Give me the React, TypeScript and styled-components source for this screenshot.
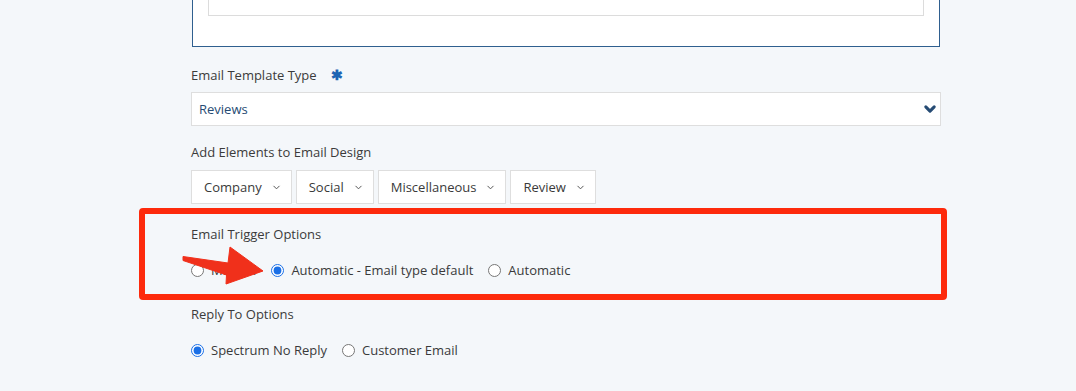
import React from "react";
import styled, { createGlobalStyle } from "styled-components";

const GlobalStyle = createGlobalStyle`
    body {
        margin: 0;
        background: #f4f7fa;
        font-family: "Open Sans", "Liberation Sans", sans-serif;
        color: #3a3a3a;
    }
`;

const Column = styled.div`
    margin-left: 191px;
    width: 750px;
    display: flex;
    flex-direction: column;
`;

const TopBox = styled.div`
    margin-left: 1px;
    width: 748px;
    box-sizing: border-box;
    background: #fff;
    border: 1px solid #2f5f8f;
    border-top: none;
    padding: 0 15px 30px 15px;
    > div {
        height: 16px;
        box-sizing: border-box;
        border: 1px solid #dcdcdc;
        border-top: none;
    }
`;

const Label = styled.div<{ $gap: number }>`
    margin-top: ${(p) => p.$gap}px;
    font-size: 13px;
    line-height: 18px;
    height: 18px;
    display: flex;
    align-items: center;
    gap: 14px;
    color: #3b3b3b;
`;

const Required = styled.span`
    color: #1d64b3;
    font-size: 14px;
    font-weight: 700;
`;

const SelectBox = styled.div`
    margin-top: 8px;
    height: 34px;
    box-sizing: border-box;
    background: #fff;
    border: 1px solid #dedede;
    display: flex;
    align-items: center;
    justify-content: space-between;
    padding: 0 3px 0 7px;
    font-size: 13px;
    color: #264b74;
`;

const ButtonRow = styled.div`
    margin-top: 9px;
    display: flex;
    gap: 4px;
`;

const DropButton = styled.div`
    height: 34px;
    box-sizing: border-box;
    background: #fff;
    border: 1px solid #dedede;
    display: flex;
    align-items: center;
    gap: 10px;
    padding: 0 10px 0 12px;
    font-size: 13px;
    color: #3a3a3a;
`;

const Section = styled.div`
    position: relative;
    display: flex;
    flex-direction: column;
`;

const Highlight = styled.div`
    position: absolute;
    left: -52px;
    top: -17px;
    width: 808px;
    height: 92px;
    box-sizing: border-box;
    border: 6px solid #fd2a0c;
    border-radius: 4px;
    pointer-events: none;
`;

const Arrow = styled.svg`
    position: absolute;
    left: -16px;
    top: 16px;
    width: 100px;
    height: 50px;
    overflow: visible;
`;

const RadioRow = styled.div`
    margin-top: 18px;
    height: 18px;
    display: flex;
    align-items: center;
    gap: 15px;
`;

const RadioLabel = styled.label`
    display: flex;
    align-items: center;
    gap: 7px;
    font-size: 13px;
    color: #3a3a3a;
    input {
        margin: 0;
        width: 13px;
        height: 13px;
        accent-color: #1a6fe6;
    }
`;

const Chevron = ({ size, width, color }: { size: number; width: number; color: string }) => (
    <svg width={size} height={size} viewBox="0 0 10 10">
        <path d="M2 3.5 L5 6.5 L8 3.5" fill="none" stroke={color} strokeWidth={width} strokeLinecap="round" strokeLinejoin="round" />
    </svg>
);

const Radio = ({ name, label, checked }: { name: string; label: string; checked?: boolean }) => (
    <RadioLabel>
        <input type="radio" name={name} defaultChecked={checked} />
        {label}
    </RadioLabel>
);

export default function App() {
    return (
        <>
            <GlobalStyle />
            <Column>
                <TopBox>
                    <div />
                </TopBox>

                <Label $gap={19}>
                    Email Template Type <Required>✱</Required>
                </Label>
                <SelectBox>
                    Reviews
                    <Chevron size={14} width={2.2} color="#264b74" />
                </SelectBox>

                <Label $gap={17}>Add Elements to Email Design</Label>
                <ButtonRow>
                    {["Company", "Social", "Miscellaneous", "Review"].map((b) => (
                        <DropButton key={b}>
                            {b}
                            <Chevron size={9} width={1.1} color="#555" />
                        </DropButton>
                    ))}
                </ButtonRow>

                <Section style={{ marginTop: 21 }}>
                    <Label $gap={0}>Email Trigger Options</Label>
                    <RadioRow>
                        <Radio name="trigger" label="Manual" />
                        <Radio name="trigger" label="Automatic - Email type default" checked />
                        <Radio name="trigger" label="Automatic" />
                    </RadioRow>
                    <Highlight />
                    <Arrow viewBox="0 0 100 50">
                        <polygon
                            points="8,15.5 53,22 55,6 88,30 51,43 51.5,34 8,19.5"
                            fill="#f0301b"
                            stroke="#f0301b"
                            strokeWidth={1}
                            strokeLinejoin="round"
                        />
                    </Arrow>
                </Section>

                <Label $gap={26}>Reply To Options</Label>
                <RadioRow>
                    <Radio name="reply" label="Spectrum No Reply" checked />
                    <Radio name="reply" label="Customer Email" />
                </RadioRow>
            </Column>
        </>
    );
}
